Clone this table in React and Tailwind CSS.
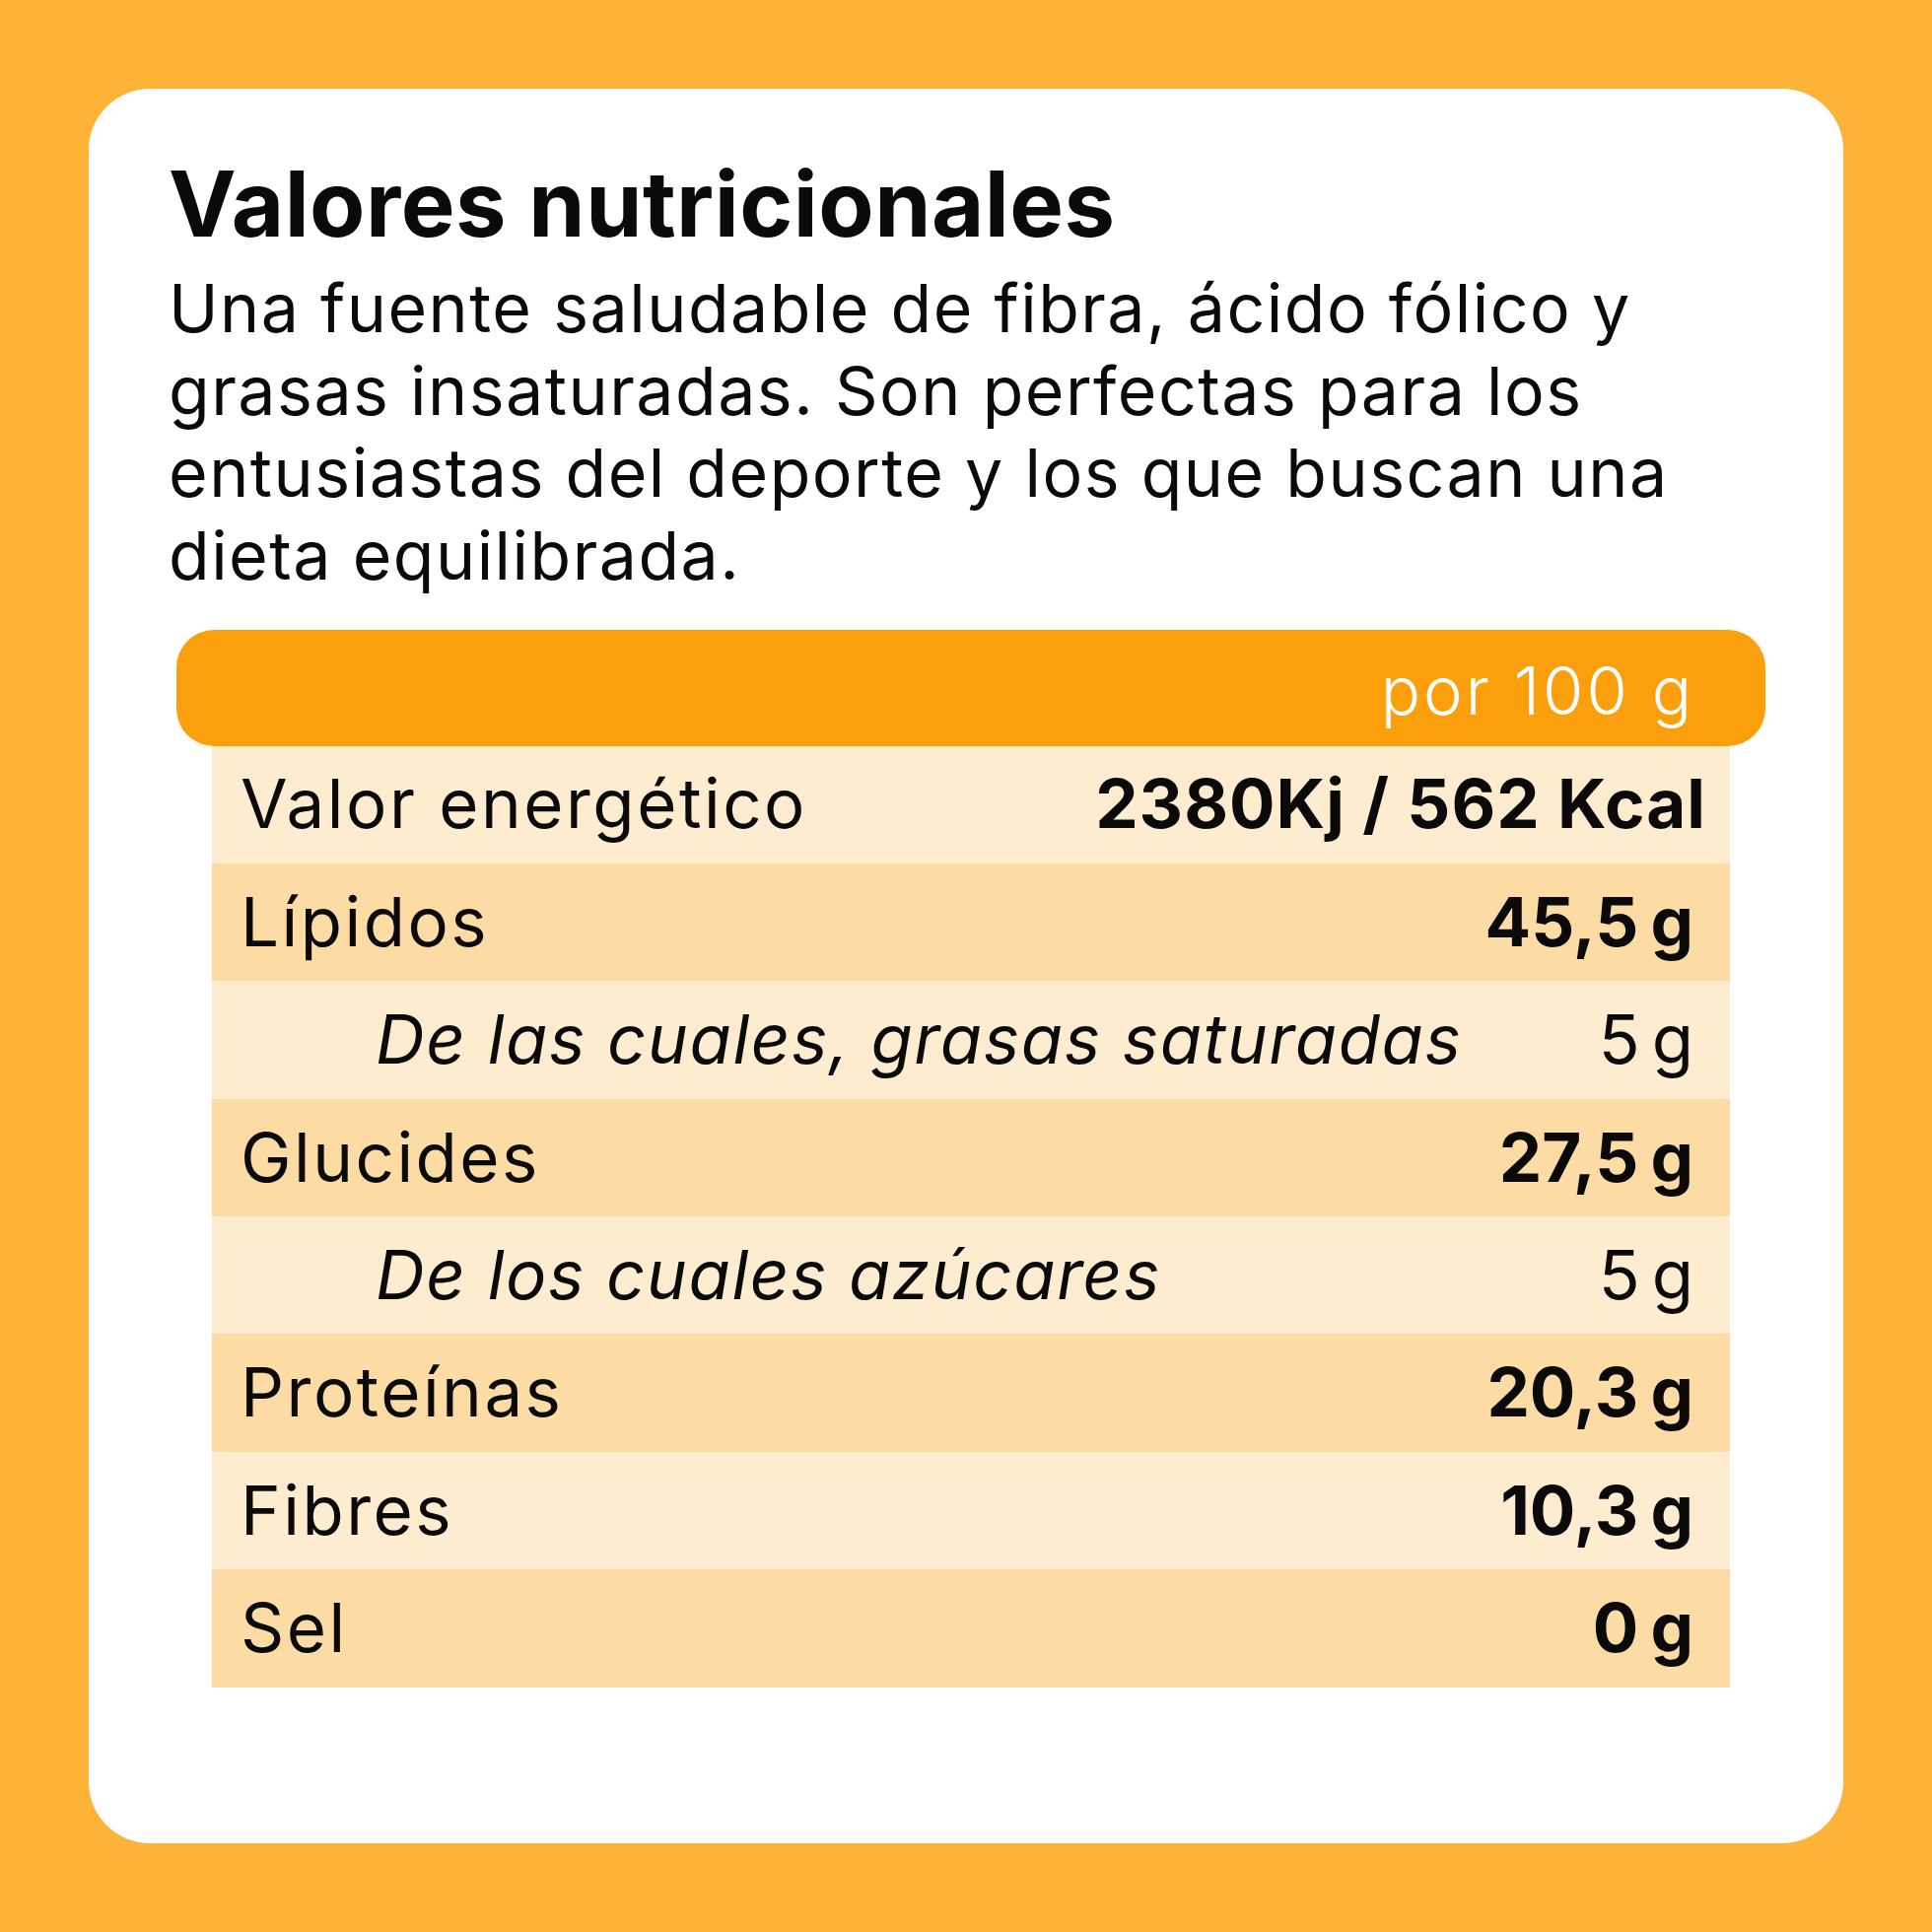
const rows = [
  { label: "Valor energético", value: "2380Kj / 562 Kcal", tone: "light", wide: true },
  { label: "Lípidos", value: "45,5", unit: "g", tone: "dark" },
  { label: "De las cuales, grasas saturadas", value: "5", unit: "g", tone: "light", sub: true },
  { label: "Glucides", value: "27,5", unit: "g", tone: "dark" },
  { label: "De los cuales azúcares", value: "5", unit: "g", tone: "light", sub: true },
  { label: "Proteínas", value: "20,3", unit: "g", tone: "dark" },
  { label: "Fibres", value: "10,3", unit: "g", tone: "light" },
  { label: "Sel", value: "0", unit: "g", tone: "dark" },
];

const font = { fontFamily: "Inter, 'Open Sans', sans-serif" };

export default function App() {
  return (
    <div className="w-[1960px] h-[1960px] bg-[#FCB337] p-[90px]" style={font}>
      <div className="h-full bg-white rounded-[62px] pl-[81px] pr-[79px] pt-[62px] text-[#0a0a0a]">
        <h1 className="text-[92px] font-bold leading-[110px] tracking-[0.5px]">Valores nutricionales</h1>
        <p className="text-[68px] leading-[83.5px] mt-[9px] font-normal tracking-[1.5px]">
          Una fuente saludable de fibra, ácido fólico y<br />
          grasas insaturadas. Son perfectas para los<br />
          entusiastas del deporte y los que buscan una<br />
          dieta equilibrada.
        </p>

        <div className="mt-[34px] ml-[8px] h-[117.5px] bg-[#FBA00C] rounded-[38px] flex items-center justify-end pr-[72px] pt-[6px]">
          <span className="text-white text-[67px] font-light tracking-[3px]">por 100 g</span>
        </div>

        <div className="ml-[44px] w-[1540px]">
          {rows.map((r) => (
            <div
              key={r.label}
              className={`h-[119.4px] flex items-center justify-between ${
                r.tone === "light" ? "bg-[#FDECD0]" : "bg-[#FDDBA4]"
              } ${r.wide ? "pr-[24px]" : "pr-[37px]"} ${r.sub ? "pl-[166px]" : "pl-[29px]"}`}
            >
              <span className={`text-[69px] ${r.sub ? "italic tracking-[1.6px]" : "tracking-[2.5px]"}`}>
                {r.label}
              </span>
              {r.unit ? (
                <span className={`text-[69px] ${r.sub ? "font-normal" : "font-bold"}`}>
                  {r.value}
                  <span className="ml-[12px]">{r.unit}</span>
                </span>
              ) : (
                <span className="text-[69px] font-bold tracking-[1px]">{r.value}</span>
              )}
            </div>
          ))}
        </div>
      </div>
    </div>
  );
}
